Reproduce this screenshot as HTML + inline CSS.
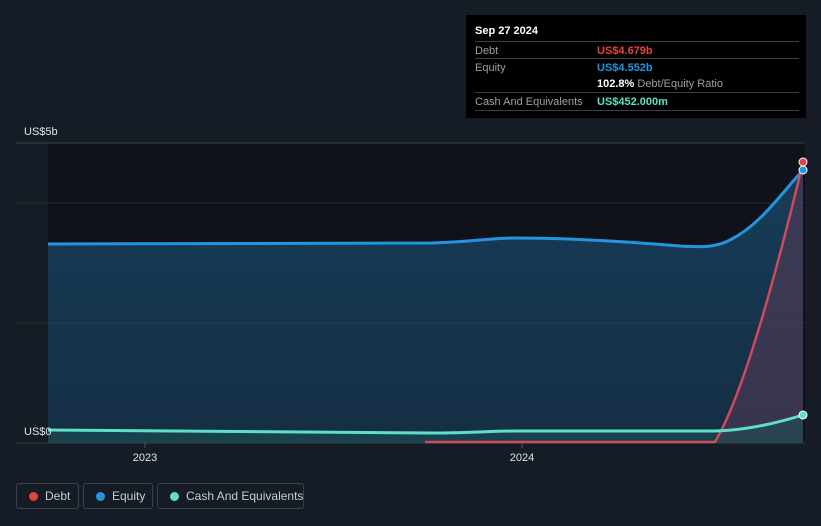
<!DOCTYPE html>
<html><head><meta charset="utf-8"><style>
html,body{margin:0;padding:0;background:#161c26;width:821px;height:526px;overflow:hidden;font-family:"Liberation Sans",sans-serif;}
.tt{position:absolute;left:466px;top:15px;width:340px;height:103px;background:#000;color:#fff;font-size:11px;}
.tt .h{position:absolute;left:9px;top:10px;font-size:11px;font-weight:bold;}
.row{position:absolute;left:9px;width:324px;border-top:1px solid #3a3f46;height:17px;white-space:nowrap;}
.row span{position:absolute;top:3px;}
.l{left:0;color:#9aa0a8;}
.v{left:122px;font-weight:bold;}
.leg{position:absolute;top:483px;height:26px;border:1px solid #3c424b;border-radius:3px;color:#c8ccd2;font-size:12px;box-sizing:border-box;white-space:nowrap;}
.leg i{position:absolute;left:12px;top:8px;width:9px;height:9px;border-radius:50%;}
.leg span{position:absolute;left:28px;top:5px;}
</style></head><body>
<svg width="821" height="526" style="position:absolute;left:0;top:0">
<defs>
<linearGradient id="eq" x1="0" y1="0" x2="0" y2="1"><stop offset="0" stop-color="#1a4a6e" stop-opacity="0.75"/><stop offset="1" stop-color="#1a4a6e" stop-opacity="0.5"/></linearGradient>
</defs>
<rect x="48" y="143" width="757" height="300" fill="#0f1319"/>
<line x1="16" y1="143" x2="805" y2="143" stroke="#3a3f46"/>
<line x1="16" y1="203" x2="805" y2="203" stroke="#262b33"/>
<line x1="16" y1="323" x2="805" y2="323" stroke="#262b33"/>
<line x1="16" y1="443" x2="805" y2="443" stroke="#3a3f46"/>
<line x1="145" y1="443" x2="145" y2="448" stroke="#555"/>
<line x1="522" y1="443" x2="522" y2="448" stroke="#555"/>
<path d="M48 244 L430 243 C470 242 490 238 515 238 C560 238 620 241 680 246 C700 247 715 248 730 240 C760 225 780 195 803 170 L803 443 L48 443Z" fill="url(#eq)"/>
<path d="M715 443 C740 400 770 300 803 162 L803 443Z" fill="#5a3a55" opacity="0.55"/>
<path d="M48 430 L430 433 C470 433 490 431 515 431 L715 431 C750 430 780 422 803 415 L803 443 L48 443Z" fill="#1e4f55" opacity="0.55"/>
<path d="M48 244 L430 243 C470 242 490 238 515 238 C560 238 620 241 680 246 C700 247 715 248 730 240 C760 225 780 195 803 170" fill="none" stroke="#2394df" stroke-width="3"/>
<path d="M425 442 L715 442 C740 400 770 300 803 162" fill="none" stroke="#d0495d" stroke-width="2.5"/>
<path d="M48 430 L430 433 C470 433 490 431 515 431 L715 431 C750 430 780 422 803 415" fill="none" stroke="#5ee0c8" stroke-width="3"/>
<circle cx="803" cy="162" r="4" fill="#e84142" stroke="#fff" stroke-width="1"/>
<circle cx="803" cy="170" r="4" fill="#2394df" stroke="#fff" stroke-width="1"/>
<circle cx="803" cy="415" r="4" fill="#5ee0c8" stroke="#fff" stroke-width="1"/>
<text x="24" y="135" fill="#e0e3e7" font-size="11" font-family="Liberation Sans">US$5b</text>
<text x="24" y="435" fill="#e0e3e7" font-size="11" font-family="Liberation Sans">US$0</text>
<text x="145" y="461" fill="#e0e3e7" font-size="11" text-anchor="middle" font-family="Liberation Sans">2023</text>
<text x="522" y="461" fill="#e0e3e7" font-size="11" text-anchor="middle" font-family="Liberation Sans">2024</text>
</svg>
<div class="tt">
<div class="h">Sep 27 2024</div>
<div class="row" style="top:26px"><span class="l">Debt</span><span class="v" style="color:#e84142">US$4.679b</span></div>
<div class="row" style="top:43px"><span class="l">Equity</span><span class="v" style="color:#2394df">US$4.552b</span></div>
<div class="row" style="top:60px;border-top:none"><span class="v" style="color:#fff">102.8% <b style="color:#9aa0a8;font-weight:normal">Debt/Equity Ratio</b></span></div>
<div class="row" style="top:77px"><span class="l">Cash And Equivalents</span><span class="v" style="color:#5ee0c8">US$452.000m</span></div>
<div class="row" style="top:95px;height:0"></div>
</div>
<div class="leg" style="left:16px;width:63px"><i style="background:#e84142"></i><span>Debt</span></div>
<div class="leg" style="left:83px;width:70px"><i style="background:#2394df"></i><span>Equity</span></div>
<div class="leg" style="left:157px;width:147px"><i style="background:#5ee0c8"></i><span>Cash And Equivalents</span></div>
</body></html>
